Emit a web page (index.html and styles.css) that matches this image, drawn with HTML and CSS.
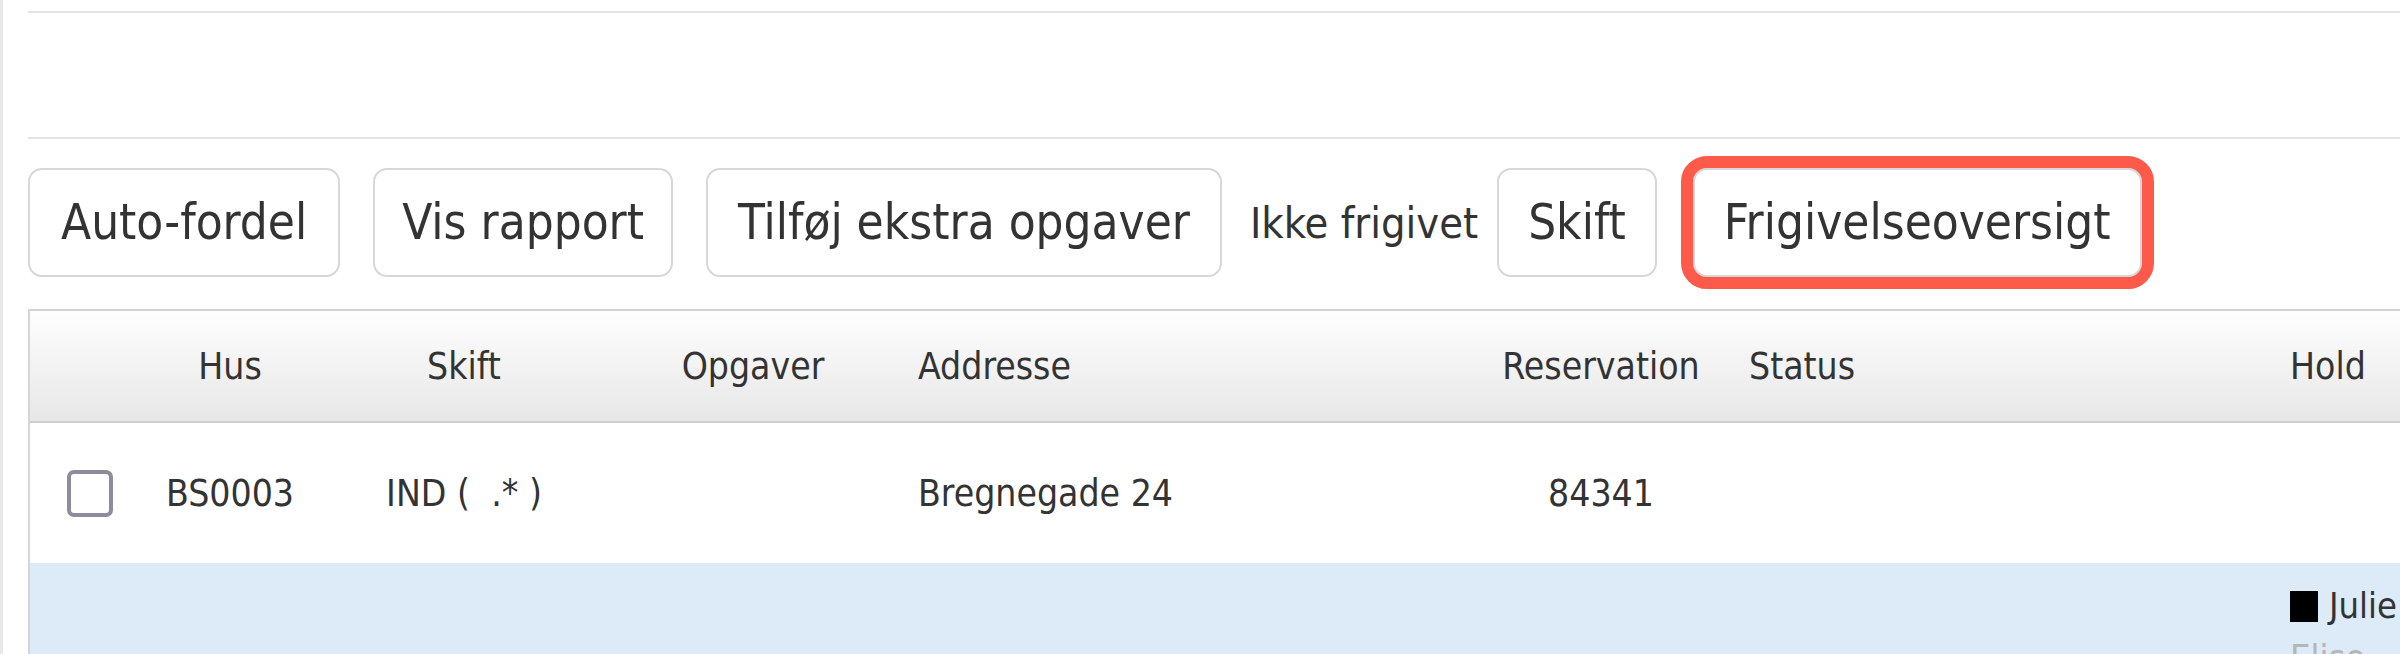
FILE: index.html
```html
<!DOCTYPE html>
<html lang="da">
<head>
<meta charset="utf-8">
<title>Frigivelse</title>
<link rel="stylesheet" href="styles.css">
</head>
<body>
<div class="page">
  <div class="topbar"></div>
  <div class="toolbar">
    <button class="btn btn-auto">Auto-fordel</button>
    <button class="btn btn-report">Vis rapport</button>
    <button class="btn btn-extra">Tilføj ekstra opgaver</button>
    <span class="status-label">Ikke frigivet</span>
    <button class="btn btn-skift">Skift</button>
    <button class="btn btn-highlight">Frigivelseoversigt</button>
  </div>
  <div class="grid">
    <div class="row head">
      <div class="cell c-check"></div>
      <div class="cell c-center">Hus</div>
      <div class="cell c-center">Skift</div>
      <div class="cell c-center">Opgaver</div>
      <div class="cell c-left c-addr">Addresse</div>
      <div class="cell c-center">Reservation</div>
      <div class="cell c-left c-status">Status</div>
      <div class="cell c-left c-hold">Hold</div>
    </div>
    <div class="row body">
      <div class="cell c-check"><span class="checkbox"></span></div>
      <div class="cell c-center">BS0003</div>
      <div class="cell c-center">IND (&nbsp; .* )</div>
      <div class="cell c-center"></div>
      <div class="cell c-left c-addr">Bregnegade 24</div>
      <div class="cell c-center">84341</div>
      <div class="cell c-left c-status"></div>
      <div class="cell c-left c-hold"></div>
    </div>
    <div class="row body selected">
      <div class="cell c-check"></div>
      <div class="cell"></div>
      <div class="cell"></div>
      <div class="cell"></div>
      <div class="cell c-addr"></div>
      <div class="cell"></div>
      <div class="cell c-status"></div>
      <div class="cell c-hold c-team">
        <div class="member"><span class="swatch"></span>Julie</div>
        <div class="member muted">Elise</div>
      </div>
    </div>
  </div>
</div>
</body>
</html>
```

FILE: styles.css
```css
html, body {
  margin: 0;
  padding: 0;
  background: #ffffff;
  overflow: hidden;
}

body {
  width: 2400px;
  height: 654px;
  font-family: "DejaVu Sans Condensed", "DejaVu Sans", "Liberation Sans", sans-serif;
  font-stretch: condensed;
  color: #333333;
}

.page {
  height: 654px;
  border-left: 3px solid #e9e9e9;
  padding: 11px 0 0 25px;
  box-sizing: border-box;
}

.topbar {
  height: 124px;
  border-top: 2px solid #e4e4e4;
  border-bottom: 2px solid #e4e4e4;
}

.toolbar {
  display: flex;
  align-items: center;
  margin-top: 29px;
  height: 109px;
}

.btn {
  height: 109px;
  box-sizing: border-box;
  padding: 0 31px;
  border: 2px solid #d7d7d7;
  border-radius: 14px;
  background: #ffffff;
  font-family: inherit;
  font-stretch: condensed;
  font-size: 49px;
  color: #333333;
  margin-right: 33px;
}

.btn-report {
  padding: 0 27px;
}

.btn-extra {
  padding: 0 30px;
  margin-right: 28px;
}

.status-label {
  font-size: 43px;
  color: #333333;
  margin-right: 19px;
}

.btn-skift {
  padding: 0 29px;
  margin-right: 36px;
}

.btn-highlight {
  padding: 0 29px;
  outline: 12px solid #fd5a4a;
  outline-offset: 0;
}

.grid {
  margin-top: 32px;
  border-top: 2px solid #d3d3d3;
  border-left: 2px solid #d6d6d6;
}

.row {
  display: grid;
  grid-template-columns: 120px 160px 308px 270px 592px 242px 538px 1fr;
  font-size: 37px;
}

.head {
  height: 112px;
  box-sizing: border-box;
  background: linear-gradient(#fefefe, #e7e7e7);
  border-bottom: 2px solid #cdcdcd;
}

.body {
  height: 140px;
}

.selected {
  background: #dcebf7;
  height: 200px;
}

.cell {
  display: flex;
  align-items: center;
  white-space: nowrap;
}

.c-center {
  justify-content: center;
}

.c-check {
  justify-content: center;
}

.c-addr {
  padding-left: 30px;
}

.c-status {
  padding-left: 27px;
}

.c-hold {
  padding-left: 30px;
}

.checkbox {
  width: 46px;
  height: 47px;
  box-sizing: border-box;
  border: 4px solid #8d8b9c;
  border-radius: 7px;
  background: #ffffff;
}

.c-team {
  flex-direction: column;
  align-items: flex-start;
  justify-content: flex-start;
  padding-top: 17px;
  font-size: 36px;
}

.member {
  display: flex;
  align-items: center;
  line-height: 52px;
}

.swatch {
  display: inline-block;
  width: 28px;
  height: 31px;
  background: #000000;
  margin-right: 11px;
}

.muted {
  color: #b5b5b5;
}
```
